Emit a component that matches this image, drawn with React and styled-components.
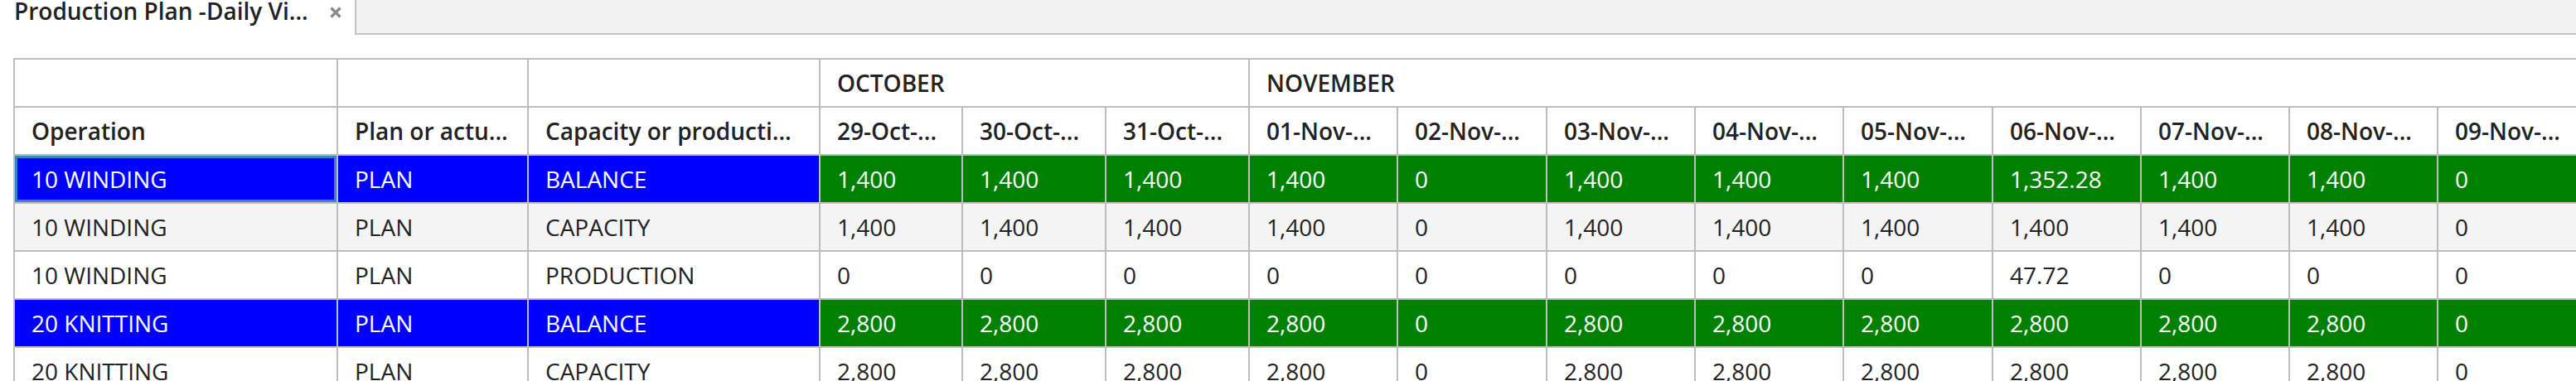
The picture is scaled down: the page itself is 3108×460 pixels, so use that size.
import React from "react";
import styled, { createGlobalStyle, css } from "styled-components";

const GlobalStyle = createGlobalStyle`
  html, body {
    margin: 0;
    padding: 0;
    overflow: hidden;
    background: #ffffff;
  }
  body {
    font-family: "Open Sans", "Liberation Sans", sans-serif;
    color: #222222;
  }
`;

const Page = styled.div`
  width: 3108px;
  height: 460px;
  overflow: hidden;
  display: flex;
  flex-direction: column;
`;

const TabStrip = styled.div`
  display: flex;
  height: 42px;
  flex: none;
`;

const Tab = styled.div`
  display: flex;
  align-items: flex-start;
  width: 428px;
  box-sizing: border-box;
  padding-left: 17px;
  background: #ffffff;
`;

const TabTitle = styled.span`
  display: block;
  width: 354px;
  font-size: 28px;
  font-weight: 600;
  line-height: 28px;
  margin-top: -1px;
  white-space: nowrap;
  color: #222222;
`;

const CloseButton = styled.span`
  display: flex;
  margin-left: 27px;
  margin-top: 8px;
  width: 14px;
  height: 14px;
`;

const TabFiller = styled.div`
  flex: 1;
  background: #f2f2f2;
  border-left: 2px solid #c4c4c4;
  border-bottom: 2px solid #c4c4c4;
`;

const Grid = styled.div`
  display: grid;
  grid-template-columns: ${(p) => p.$cols};
  grid-auto-rows: 58px;
  width: max-content;
  margin: 28px 0 0 16px;
  border-left: 2px solid #bdbdbd;
  border-top: 2px solid #bdbdbd;
`;

const toneStyles = {
  blue: css`
    background: #0000ff;
    color: #ffffff;
  `,
  green: css`
    background: #008000;
    color: #ffffff;
  `,
  stripe: css`
    background: #f4f4f4;
    color: #222222;
  `,
  plain: css`
    background: #ffffff;
    color: #222222;
  `,
};

const Cell = styled.div`
  box-sizing: border-box;
  min-width: 0;
  padding: 0 20px;
  border-right: 2px solid #bdbdbd;
  border-bottom: 2px solid #bdbdbd;
  font-size: 28px;
  line-height: 56px;
  white-space: nowrap;
  ${(p) => toneStyles[p.$tone || "plain"]}
  ${(p) =>
    p.$head &&
    css`
      font-weight: 600;
      color: #222222;
    `}
  ${(p) =>
    p.$span &&
    css`
      grid-column: span ${p.$span};
    `}
  ${(p) =>
    p.$focused &&
    css`
      box-shadow: inset 0 0 0 3px #3587c8;
    `}
`;

const dates = [
  { label: "29-Oct-...", w: 172 },
  { label: "30-Oct-...", w: 173 },
  { label: "31-Oct-...", w: 173 },
  { label: "01-Nov-...", w: 179 },
  { label: "02-Nov-...", w: 180 },
  { label: "03-Nov-...", w: 179 },
  { label: "04-Nov-...", w: 179 },
  { label: "05-Nov-...", w: 180 },
  { label: "06-Nov-...", w: 179 },
  { label: "07-Nov-...", w: 179 },
  { label: "08-Nov-...", w: 179 },
  { label: "09-Nov-...", w: 179 },
];

const fixedCols = [
  { label: "Operation", w: 390 },
  { label: "Plan or actu...", w: 230 },
  { label: "Capacity or producti...", w: 352 },
];

const months = [
  { label: "OCTOBER", span: 3 },
  { label: "NOVEMBER", span: 9 },
];

const rows = [
  {
    op: "10 WINDING",
    plan: "PLAN",
    kind: "BALANCE",
    values: ["1,400", "1,400", "1,400", "1,400", "0", "1,400", "1,400", "1,400", "1,352.28", "1,400", "1,400", "0"],
  },
  {
    op: "10 WINDING",
    plan: "PLAN",
    kind: "CAPACITY",
    values: ["1,400", "1,400", "1,400", "1,400", "0", "1,400", "1,400", "1,400", "1,400", "1,400", "1,400", "0"],
  },
  {
    op: "10 WINDING",
    plan: "PLAN",
    kind: "PRODUCTION",
    values: ["0", "0", "0", "0", "0", "0", "0", "0", "47.72", "0", "0", "0"],
  },
  {
    op: "20 KNITTING",
    plan: "PLAN",
    kind: "BALANCE",
    values: ["2,800", "2,800", "2,800", "2,800", "0", "2,800", "2,800", "2,800", "2,800", "2,800", "2,800", "0"],
  },
  {
    op: "20 KNITTING",
    plan: "PLAN",
    kind: "CAPACITY",
    values: ["2,800", "2,800", "2,800", "2,800", "0", "2,800", "2,800", "2,800", "2,800", "2,800", "2,800", "0"],
  },
];

const CloseIcon = () => (
  <svg width="14" height="14" viewBox="0 0 14 14">
    <path d="M1.5 1.5 L12.5 12.5 M12.5 1.5 L1.5 12.5" stroke="#8a8a8a" strokeWidth="3.2" />
  </svg>
);

export default function App() {
  const cols = [...fixedCols, ...dates].map((c) => `${c.w}px`).join(" ");
  return (
    <>
      <GlobalStyle />
      <Page>
        <TabStrip>
          <Tab>
            <TabTitle>Production Plan -Daily Vi...</TabTitle>
            <CloseButton>
              <CloseIcon />
            </CloseButton>
          </Tab>
          <TabFiller />
        </TabStrip>
        <Grid $cols={cols}>
          {fixedCols.map((c) => (
            <Cell key={`blank-${c.label}`} $head />
          ))}
          {months.map((m) => (
            <Cell key={m.label} $head $span={m.span}>
              {m.label}
            </Cell>
          ))}
          {fixedCols.map((c) => (
            <Cell key={c.label} $head>
              {c.label}
            </Cell>
          ))}
          {dates.map((d) => (
            <Cell key={d.label} $head>
              {d.label}
            </Cell>
          ))}
          {rows.map((r, ri) => {
            const balance = r.kind === "BALANCE";
            const base = ri % 2 === 1 ? "stripe" : "plain";
            const left = balance ? "blue" : base;
            const right = balance ? "green" : base;
            return (
              <React.Fragment key={ri}>
                <Cell $tone={left} $focused={ri === 0}>
                  {r.op}
                </Cell>
                <Cell $tone={left}>{r.plan}</Cell>
                <Cell $tone={left}>{r.kind}</Cell>
                {r.values.map((v, vi) => (
                  <Cell key={vi} $tone={right}>
                    {v}
                  </Cell>
                ))}
              </React.Fragment>
            );
          })}
        </Grid>
      </Page>
    </>
  );
}
